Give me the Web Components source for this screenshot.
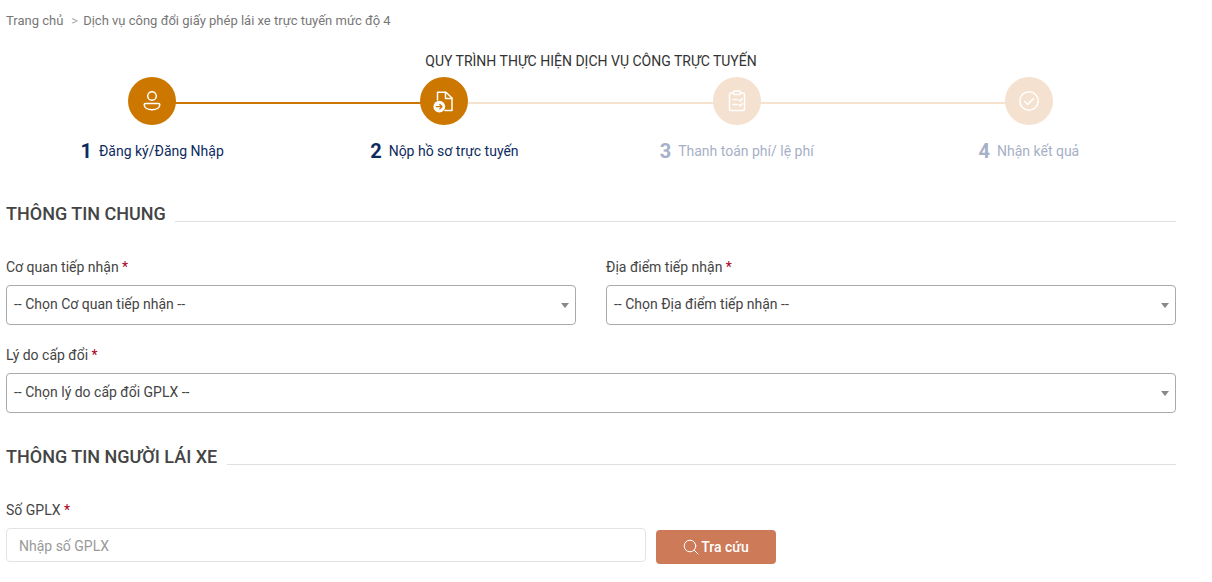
<!DOCTYPE html>
<html lang="vi">
<head>
<meta charset="utf-8">
<title>Dịch vụ công đổi giấy phép lái xe</title>
<style>
    html, body { margin: 0; background: #fff; }
    body { font-family: Roboto, "Liberation Sans", sans-serif; font-size: 14px; color: #333; }
    app-page { width: 1170px; }
</style>
</head>
<body>
<app-page>
    <bread-crumb>
        <span>Trang chủ</span>
        <span slot="current">Dịch vụ công đổi giấy phép lái xe trực tuyến mức độ 4</span>
    </bread-crumb>

    <step-bar title-text="QUY TRÌNH THỰC HIỆN DỊCH VỤ CÔNG TRỰC TUYẾN">
        <step-item number="1" icon="user" done>Đăng ký/Đăng Nhập</step-item>
        <step-item number="2" icon="file" active>Nộp hồ sơ trực tuyến</step-item>
        <step-item number="3" icon="list">Thanh toán phí/ lệ phí</step-item>
        <step-item number="4" icon="check" last>Nhận kết quả</step-item>
    </step-bar>

    <form-section heading="THÔNG TIN CHUNG" style="--section-top: 39px">
        <form-field label="Cơ quan tiếp nhận"><select-box>-- Chọn Cơ quan tiếp nhận --</select-box></form-field>
        <form-field label="Địa điểm tiếp nhận"><select-box>-- Chọn Địa điểm tiếp nhận --</select-box></form-field>
        <form-field label="Lý do cấp đổi" wide><select-box>-- Chọn lý do cấp đổi GPLX --</select-box></form-field>
    </form-section>

    <form-section heading="THÔNG TIN NGƯỜI LÁI XE" style="--section-top: 32px">
        <form-field label="Số GPLX" wide><search-input placeholder="Nhập số GPLX">Tra cứu</search-input></form-field>
    </form-section>
</app-page>

<script>
const ICONS = {
    user: `<circle cx="12" cy="7" r="4.300"/><path d="M5.500 14.500h13c.8 0 1.300.5 1.300 1.200 0 3-3.400 5-7.800 5s-7.800-2-7.800-5c0-.7.5-1.200 1.300-1.200z"/>`,
    file: `<path d="M5.500 11V3.200H14L20 9v12.500h-7"/><path d="M13.500 3.500v6h6.500"/><circle cx="7.300" cy="17.700" r="5.900" fill="#fff" stroke="none"/><path d="M4.300 17.700h5.500M7.800 15.500l2.200 2.200-2.200 2.200" stroke="#cc7700" stroke-width="1.300"/>`,
    list: `<rect x="4.500" y="4" width="15" height="17.500" rx="1.500"/><rect x="8.500" y="2" width="7" height="3.500" rx="1" fill="#f5e1cf"/><path d="M8 10.500h4M8 15.500h4M14 10.700l1.200 1.200 2-2.200M14 15.700l1.200 1.200 2-2.200"/>`,
    check: `<circle cx="12" cy="12" r="9.200"/><path d="M7.700 12.500l3 2.900 5.800-5.800"/>`
};

class AppPage extends HTMLElement {
    constructor() {
        super();
        this.attachShadow({ mode: "open" });
        this.shadowRoot.innerHTML = `
            <style>
                :host { display: block; margin-left: 6px; }
            </style>
            <slot></slot>
        `;
    }
}

class BreadCrumb extends HTMLElement {
    constructor() {
        super();
        this.attachShadow({ mode: "open" });
        this.shadowRoot.innerHTML = `
            <style>
                :host { display: flex; align-items: center; height: 16px; padding-top: 13px; font-size: 13px; color: #777; line-height: 16px; }
                .sep { margin: 0 5px 0 8px; color: #aaa; font-size: 13px; }
            </style>
            <slot></slot><span class="sep">&gt;</span><slot name="current"></slot>
        `;
    }
}

class StepBar extends HTMLElement {
    constructor() {
        super();
        this.attachShadow({ mode: "open" });
        this.shadowRoot.innerHTML = `
            <style>
                :host { display: block; padding-top: 23px; }
                h3 { margin: 0 0 7px; font-size: 14px; line-height: 18px; font-weight: 400; text-align: center; color: #333; }
                .steps { display: grid; grid-template-columns: repeat(4, 1fr); padding-right: 1px; }
            </style>
            <h3></h3>
            <div class="steps"><slot></slot></div>
        `;
        this.shadowRoot.querySelector("h3").textContent = this.getAttribute("title-text");
    }
}

class StepItem extends HTMLElement {
    constructor() {
        super();
        this.attachShadow({ mode: "open" });
        const lit = this.hasAttribute("done") || this.hasAttribute("active");
        const lineColor = this.hasAttribute("done") ? "#cc7700" : "#f5e3d0";
        this.shadowRoot.innerHTML = `
            <style>
                :host { display: flex; flex-direction: column; align-items: center; position: relative; }
                .line { position: absolute; top: 25px; left: 50%; width: 100%; height: 2px; background: ${lineColor}; }
                .dot { position: relative; width: 48px; height: 48px; border-radius: 50%; display: flex; align-items: center; justify-content: center; background: ${lit ? "#cc7700" : "#f5e1cf"}; }
                svg { width: 24px; height: 24px; fill: none; stroke: #fff; stroke-width: 1.500; stroke-linecap: round; stroke-linejoin: round; }
                .label { display: flex; align-items: center; gap: 7px; margin-top: 14px; height: 24px; font-size: 14px; color: ${lit ? "#0d2b5e" : "#a6b0c6"}; }
                b { font-size: 20px; font-weight: 700; }
            </style>
            ${this.hasAttribute("last") ? "" : `<div class="line"></div>`}
            <div class="dot"><svg viewBox="0 0 24 24">${ICONS[this.getAttribute("icon")]}</svg></div>
            <div class="label"><b>${this.getAttribute("number")}</b><span><slot></slot></span></div>
        `;
    }
}

class FormSection extends HTMLElement {
    constructor() {
        super();
        this.attachShadow({ mode: "open" });
        this.shadowRoot.innerHTML = `
            <style>
                :host { display: block; padding-top: var(--section-top, 30px); }
                .head { display: flex; align-items: flex-end; gap: 9.600px; height: 24px; margin-bottom: 32px; }
                h2 { margin: 0; font-size: 18px; line-height: 24px; font-weight: 500; color: #444; white-space: nowrap; }
                .rule { flex: 1; height: 1px; margin-bottom: 4px; background: #e0e0e0; }
                .grid { display: grid; grid-template-columns: 1fr 1fr; column-gap: 30px; row-gap: 21px; }
            </style>
            <div class="head"><h2></h2><div class="rule"></div></div>
            <div class="grid"><slot></slot></div>
        `;
        this.shadowRoot.querySelector("h2").textContent = this.getAttribute("heading");
    }
}

class FormField extends HTMLElement {
    constructor() {
        super();
        this.attachShadow({ mode: "open" });
        this.shadowRoot.innerHTML = `
            <style>
                :host { display: block; }
                :host([wide]) { grid-column: 1 / -1; }
                label { display: block; height: 18px; line-height: 18px; margin-bottom: 9px; font-size: 14px; color: #444; }
                i { font-style: normal; color: #a8001c; }
            </style>
            <label><span></span> <i>*</i></label>
            <slot></slot>
        `;
        this.shadowRoot.querySelector("span").textContent = this.getAttribute("label");
    }
}

class SelectBox extends HTMLElement {
    constructor() {
        super();
        this.attachShadow({ mode: "open" });
        this.shadowRoot.innerHTML = `
            <style>
                :host { display: flex; align-items: center; box-sizing: border-box; height: 40px; padding: 0 6px 0 7px; border: 1px solid #aaa; border-radius: 4px; background: #fff; font-size: 14px; color: #444; cursor: pointer; }
                .text { flex: 1; margin-bottom: 2px; }
                .arrow { width: 0; height: 0; border-left: 4px solid transparent; border-right: 4px solid transparent; border-top: 5px solid #888; }
            </style>
            <span class="text"><slot></slot></span><span class="arrow"></span>
        `;
    }
}

class SearchInput extends HTMLElement {
    constructor() {
        super();
        this.attachShadow({ mode: "open" });
        this.shadowRoot.innerHTML = `
            <style>
                :host { display: flex; align-items: flex-start; gap: 10px; }
                input { box-sizing: border-box; width: 640px; height: 34px; padding: 2px 12px 0; border: 1px solid #e3e3e3; border-radius: 4px; font: 14px Roboto, "Liberation Sans", sans-serif; color: #444; outline: none; }
                input::placeholder { color: #999; opacity: 1; }
                button { display: flex; align-items: center; justify-content: center; gap: 2px; width: 120px; height: 34px; margin-top: 2px; padding: 0; border: 0; border-radius: 4px; background: #cd7a58; color: #fff; font: 500 14px Roboto, "Liberation Sans", sans-serif; cursor: pointer; }
                svg { width: 16px; height: 16px; fill: none; stroke: #fff; stroke-width: 1; stroke-linecap: round; }
            </style>
            <input type="text">
            <button type="button">
                <svg viewBox="0 0 16 16"><circle cx="7" cy="7" r="5.800"/><path d="M11.200 11.200L15 15"/></svg>
                <slot></slot>
            </button>
        `;
        this.shadowRoot.querySelector("input").placeholder = this.getAttribute("placeholder");
    }
}

customElements.define("app-page", AppPage);
customElements.define("bread-crumb", BreadCrumb);
customElements.define("step-bar", StepBar);
customElements.define("step-item", StepItem);
customElements.define("form-section", FormSection);
customElements.define("form-field", FormField);
customElements.define("select-box", SelectBox);
customElements.define("search-input", SearchInput);
</script>
</body>
</html>
